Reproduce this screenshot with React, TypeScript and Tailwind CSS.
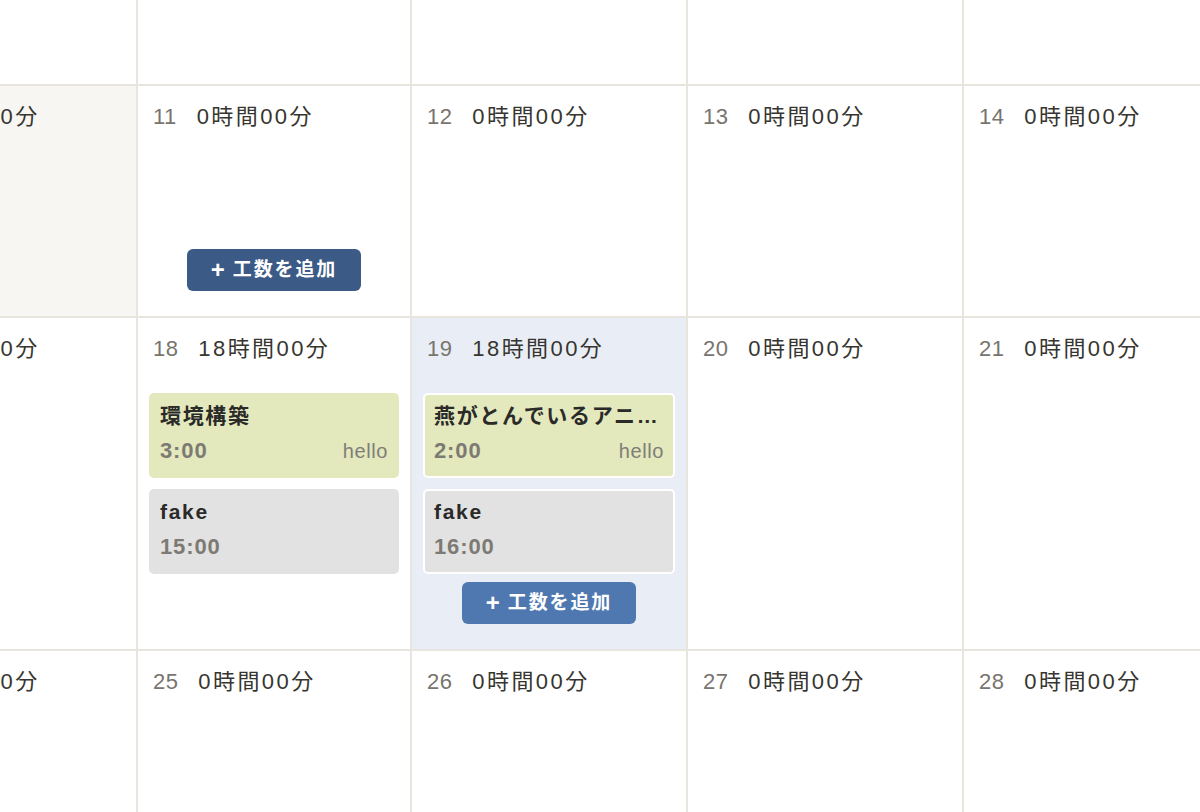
import { Fragment } from "react";

type Entry = {
  title: string;
  time: string;
  note?: string;
  tone: "green" | "gray";
};

type Day = {
  day?: number;
  total?: string;
  entries?: Entry[];
  muted?: boolean;
  selected?: boolean;
  button?: "hover" | "selected";
};

const font = {
  fontFamily: '"Liberation Sans", "Noto Sans CJK JP", sans-serif',
};

const rows: { height: string; days: Day[] }[] = [
  { height: "h-[86px]", days: [{}, {}, {}, {}, {}] },
  {
    height: "min-h-[232px]",
    days: [
      { day: 10, total: "0時間00分", muted: true },
      { day: 11, total: "0時間00分", button: "hover" },
      { day: 12, total: "0時間00分" },
      { day: 13, total: "0時間00分" },
      { day: 14, total: "0時間00分" },
    ],
  },
  {
    height: "min-h-[232px]",
    days: [
      { day: 17, total: "0時間00分" },
      {
        day: 18,
        total: "18時間00分",
        entries: [
          { title: "環境構築", time: "3:00", note: "hello", tone: "green" },
          { title: "fake", time: "15:00", tone: "gray" },
        ],
      },
      {
        day: 19,
        total: "18時間00分",
        selected: true,
        button: "selected",
        entries: [
          {
            title: "燕がとんでいるアニメーション",
            time: "2:00",
            note: "hello",
            tone: "green",
          },
          { title: "fake", time: "16:00", tone: "gray" },
        ],
      },
      { day: 20, total: "0時間00分" },
      { day: 21, total: "0時間00分" },
    ],
  },
  {
    height: "min-h-[232px]",
    days: [
      { day: 24, total: "0時間00分" },
      { day: 25, total: "0時間00分" },
      { day: 26, total: "0時間00分" },
      { day: 27, total: "0時間00分" },
      { day: 28, total: "0時間00分" },
    ],
  },
];

function EntryCard({ entry, framed }: { entry: Entry; framed: boolean }) {
  return (
    <div
      className={`rounded-[5px] border-2 px-[9px] pt-[7px] pb-[11px] ${
        framed ? "border-white" : "border-transparent"
      } ${entry.tone === "green" ? "bg-[#e3e8bd]" : "bg-[#e2e2e2]"}`}
    >
      <p className="truncate text-[21px] font-bold leading-7 tracking-[0.08em] text-[#2a2a28]">
        {entry.title}
      </p>
      <div className="mt-[7px] flex items-center justify-between leading-7">
        <span className="text-[22px] font-bold tracking-[0.04em] text-[#7d7a74]">
          {entry.time}
        </span>
        {entry.note && (
          <span className="text-[20px] tracking-[0.03em] text-[#807d77]">
            {entry.note}
          </span>
        )}
      </div>
    </div>
  );
}

function AddButton({ dark }: { dark: boolean }) {
  return (
    <button
      className={`mx-auto flex h-[42px] w-[174px] items-center justify-center gap-[8px] rounded-md text-[19px] font-bold tracking-[0.1em] text-white ${
        dark ? "bg-[#3c5a86]" : "bg-[#4f78b1]"
      }`}
    >
      <span className="text-[24px] leading-none tracking-normal">+</span>
      <span>工数を追加</span>
    </button>
  );
}

function DayCell({ d, height }: { d: Day; height: string }) {
  const bg = d.selected ? "bg-[#e9eef6]" : d.muted ? "bg-[#f7f6f3]" : "bg-white";
  return (
    <div
      className={`flex flex-col border-r-2 border-b-2 border-[#e8e5df] px-[11px] pb-[25px] ${height} ${bg}`}
    >
      {d.day !== undefined && (
        <div className="flex items-center gap-[20px] whitespace-nowrap pt-[15px] pl-1 text-[22px] leading-8">
          <span className="tracking-[0.02em] text-[#78746e]">{d.day}</span>
          <span className="tracking-[0.11em] text-[#37352f]">{d.total}</span>
        </div>
      )}
      {d.entries && (
        <div className="mt-[28px] flex flex-col gap-[11px]">
          {d.entries.map((e, i) => (
            <EntryCard key={i} entry={e} framed={!!d.selected} />
          ))}
        </div>
      )}
      {d.button && (
        <div className={d.entries ? "mt-2" : "mt-auto"}>
          <AddButton dark={d.button === "hover"} />
        </div>
      )}
    </div>
  );
}

export default function App() {
  return (
    <div className="h-[812px] w-[1200px] overflow-hidden bg-white" style={font}>
      <div className="ml-[-138px] grid w-[1378px] grid-cols-[276px_274px_276px_276px_276px]">
        {rows.map((row, r) => (
          <Fragment key={r}>
            {row.days.map((d, c) => (
              <DayCell key={c} d={d} height={row.height} />
            ))}
          </Fragment>
        ))}
      </div>
    </div>
  );
}
